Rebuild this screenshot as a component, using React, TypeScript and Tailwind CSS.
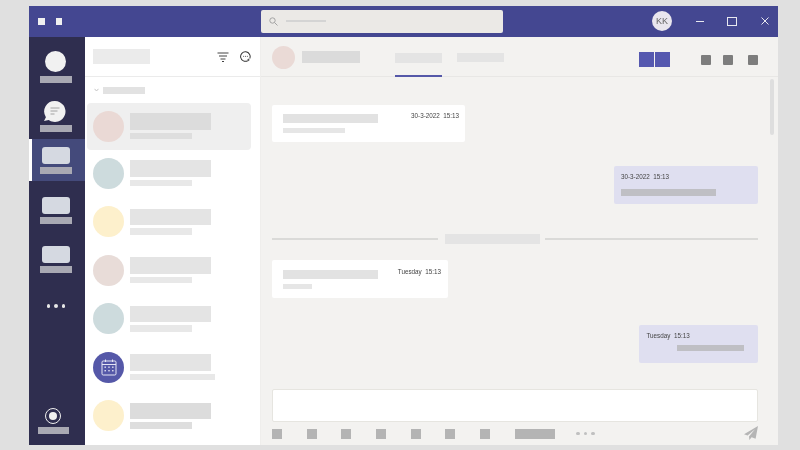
import React from "react";

const Bar = ({ className }: { className: string }) => <div className={className} />;

function FilterIcon() {
  return (
    <svg width="12" height="10" viewBox="0 0 12 10" fill="none" stroke="#444" strokeWidth="1">
      <path d="M0.5 1h11M2 4h8M3.5 7h5M5 9.5h2" />
    </svg>
  );
}

function NewChatIcon() {
  return (
    <svg width="11" height="11" viewBox="0 0 12 12" fill="none" stroke="#333" strokeWidth="1.1">
      <path d="M10.6 8.2A5.2 5.2 0 1 0 8.4 10.6" />
      <path d="M9.2 8.4v2.6M7.9 9.7h2.6" strokeWidth="0.8" />
      <circle cx="4" cy="5.7" r="0.55" fill="#333" stroke="none" />
      <circle cx="6" cy="5.7" r="0.55" fill="#333" stroke="none" />
      <circle cx="8" cy="5.7" r="0.55" fill="#333" stroke="none" />
    </svg>
  );
}

function CalendarIcon() {
  return (
    <svg width="16" height="17" viewBox="0 0 16 17" fill="none" stroke="#e6e6f4" strokeWidth="1">
      <rect x="1" y="2" width="14" height="14" rx="1.2" />
      <path d="M1 5.5h14M4.5 0.5v2.5M11.5 0.5v2.5" />
      <g fill="#e6e6f4" stroke="none">
        <rect x="3.5" y="7.5" width="1.4" height="1.4" />
        <rect x="7.3" y="7.5" width="1.4" height="1.4" />
        <rect x="11.1" y="7.5" width="1.4" height="1.4" />
        <rect x="3.5" y="11" width="1.4" height="1.4" />
        <rect x="7.3" y="11" width="1.4" height="1.4" />
        <rect x="11.1" y="11" width="1.4" height="1.4" />
      </g>
    </svg>
  );
}

function SendIcon() {
  return (
    <svg width="14" height="14" viewBox="0 0 14 14" fill="#b5b5b5">
      <path d="M14 0 L0 8.2 L3.6 9.6 L11 3.2 L5 10.4 L5.4 14 L7.6 11.2 L11.6 12.8 Z" />
    </svg>
  );
}

function SearchIcon() {
  return (
    <svg width="9" height="9" viewBox="0 0 9 9" fill="none" stroke="#a3a3a3" strokeWidth="1">
      <circle cx="3.5" cy="3.5" r="2.7" />
      <path d="M5.5 5.5L8.5 8.5" />
    </svg>
  );
}

function ChatBubble() {
  return (
    <svg width="23" height="23" viewBox="0 0 23 23" className="ml-[13.5px]">
      <path d="M12 1a10.5 10.5 0 1 1-6.3 18.9L1 21l1.9-3.8A10.5 10.5 0 0 1 12 1z" fill="#f1f1f1" />
      <path d="M7.5 8h9M7.5 11h7M7.5 14h4" stroke="#9a9a9a" strokeWidth="0.9" fill="none" />
    </svg>
  );
}

const rows = [
  { av: "bg-[#ead9d5]", active: true, cal: false, wide: false, dark: false },
  { av: "bg-[#cddbdd]", active: false, cal: false, wide: false, dark: false },
  { av: "bg-[#fdf0cc]", active: false, cal: false, wide: false, dark: false },
  { av: "bg-[#e8dcd8]", active: false, cal: false, wide: false, dark: false },
  { av: "bg-[#cddbdd]", active: false, cal: false, wide: false, dark: false },
  { av: "bg-[#5558a8]", active: false, cal: true, wide: true, dark: false },
  { av: "bg-[#fdf0cc]", active: false, cal: false, wide: false, dark: true },
];

function ListRow({ r }: { r: (typeof rows)[number] }) {
  const bar = r.active || r.dark ? "bg-[#dcdcdc]" : "bg-[#e4e4e4]";
  const sub = r.active || r.dark ? "bg-[#dedede]" : "bg-[#e8e8e8]";
  return (
    <div
      className={`flex items-center ${
        r.active
          ? "-mb-[0.5px] ml-[2px] mr-[8.5px] h-[47px] rounded-sm bg-[#efefef] pl-[6.5px]"
          : "h-[48.5px] pl-[8.5px]"
      }`}
    >
      <div className={`flex h-[31px] w-[31px] shrink-0 items-center justify-center rounded-full ${r.av}`}>
        {r.cal && <CalendarIcon />}
      </div>
      <div className="ml-[6px] flex flex-col">
        <Bar className={`h-[16.5px] w-[81px] ${bar}`} />
        <Bar className={`mt-[3px] h-[6.5px] ${r.wide ? "w-[85px]" : "w-[62px]"} ${sub}`} />
      </div>
    </div>
  );
}

const NavBar = ({ cls = "ml-[11px]" }: { cls?: string }) => (
  <div className={`h-[7px] w-[31.5px] bg-[#a9a9b3] ${cls}`} />
);

const Stamp = ({ children }: { children: string }) => (
  <span className="block whitespace-pre text-[6.3px] leading-[8px] text-[#444]">{children}</span>
);

export default function App() {
  return (
    <div
      className="h-[450px] w-[800px] overflow-hidden bg-[#e0e0e0] pb-[5px] pl-[29px] pr-[22.5px] pt-[6px] blur-[0.5px]"
      style={{ fontFamily: '"Liberation Sans", Arial, sans-serif' }}
    >
      <div className="flex h-[439px] w-[748.5px] flex-col">
        {/* title bar */}
        <div className="flex h-[30.5px] shrink-0 items-center bg-[#444791]">
          <div className="ml-[9px] h-[6.5px] w-[6.5px] bg-[#f0f0f0]" />
          <div className="ml-[11px] h-[6.5px] w-[6.5px] bg-[#f0f0f0]" />
          <div className="ml-[199px] flex h-[23px] w-[242px] items-center rounded-[2px] bg-[#ebe9e6] pl-[8px]">
            <SearchIcon />
            <div className="ml-[8px] h-[2px] w-[40px] bg-[#d4d4d4]" />
          </div>
          <div className="ml-[149px] flex h-[20px] w-[20px] items-center justify-center rounded-full bg-[#e9e6ee] text-[9px] text-[#666]">
            KK
          </div>
          <div className="ml-[24px] h-[1.2px] w-[8px] bg-[#e8e8f0]" />
          <div className="ml-[23px] h-[9.5px] w-[10px] border border-[#e8e8f0]" />
          <svg width="8" height="8" viewBox="0 0 8 8" stroke="#e8e8f0" strokeWidth="1" className="ml-[24px]">
            <path d="M0.5 0.5l7 7M7.5 0.5l-7 7" />
          </svg>
        </div>

        <div className="flex min-h-0 flex-1">
          {/* nav rail */}
          <div className="flex w-[55.5px] shrink-0 flex-col bg-[#2f2e4f]">
            <div className="ml-[16px] mt-[14.5px] h-[21px] w-[21px] rounded-full bg-[#f1f1f1]" />
            <NavBar cls="ml-[11px] mt-[4px]" />
            <div className="mt-[17px]">
              <ChatBubble />
            </div>
            <NavBar cls="ml-[11px] mt-[2px]" />
            <div className="mt-[7px] h-[42px] border-l-[3px] border-white bg-[#444a7b] pt-[8px]">
              <div className="ml-[9.5px] h-[17px] w-[28.5px] rounded-[3px] bg-[#d5d9e1]" />
              <NavBar cls="ml-[8px] mt-[3px]" />
            </div>
            <div className="ml-[12.5px] mt-[16px] h-[17px] w-[28.5px] rounded-[3px] bg-[#d5d9e1]" />
            <NavBar cls="ml-[11px] mt-[3px]" />
            <div className="ml-[12.5px] mt-[22px] h-[17px] w-[28.5px] rounded-[3px] bg-[#d5d9e1]" />
            <NavBar cls="ml-[11px] mt-[3px]" />
            <div className="ml-[17.5px] mt-[31px] flex gap-[4px]">
              <div className="h-[3.5px] w-[3.5px] rounded-full bg-[#e8e8e8]" />
              <div className="h-[3.5px] w-[3.5px] rounded-full bg-[#e8e8e8]" />
              <div className="h-[3.5px] w-[3.5px] rounded-full bg-[#e8e8e8]" />
            </div>
            <div className="ml-[16px] mt-auto flex h-[16px] w-[16px] items-center justify-center rounded-full border border-[#f0f0f0]">
              <div className="h-[8.5px] w-[8.5px] rounded-full bg-[#f0f0f0]" />
            </div>
            <NavBar cls="mb-[11px] ml-[8.5px] mt-[3px]" />
          </div>

          {/* conversation list */}
          <div className="flex w-[175px] shrink-0 flex-col bg-white">
            <div className="flex h-[40px] shrink-0 items-center border-b border-[#ebebeb] pl-[8.5px]">
              <Bar className="h-[15px] w-[57px] bg-[#ebebeb]" />
              <div className="ml-[67px] mt-[1px]">
                <FilterIcon />
              </div>
              <div className="ml-[11px]">
                <NewChatIcon />
              </div>
            </div>
            <div className="flex h-[26px] shrink-0 items-center pl-[9px] pt-[1px]">
              <svg width="5" height="4" viewBox="0 0 5 4" fill="none" stroke="#c4c4c4" strokeWidth="1">
                <path d="M0.5 0.8L2.5 3L4.5 0.8" />
              </svg>
              <Bar className="ml-[4px] h-[7px] w-[42px] bg-[#e2e2e2]" />
            </div>
            {rows.map((r, i) => (
              <ListRow key={i} r={r} />
            ))}
          </div>

          {/* main */}
          <div className="relative flex min-w-0 flex-1 flex-col border-l border-[#efeeec] bg-[#f3f2f0]">
            <div className="flex h-[40px] shrink-0 items-center border-b border-[#e8e7e5] pl-[11.5px]">
              <div className="mt-[2px] h-[23px] w-[23px] rounded-full bg-[#eadad6]" />
              <Bar className="ml-[7px] mt-[2px] h-[12px] w-[58px] bg-[#dbdbdb]" />
              <div className="relative ml-[34.5px] h-[39px] w-[47px] pt-[16.5px]">
                <Bar className="h-[9.5px] w-[47px] bg-[#e4e4e4]" />
                <div className="absolute bottom-[-1px] left-0 h-[2px] w-[47px] bg-[#5558a8]" />
              </div>
              <Bar className="ml-[15px] mt-[3px] h-[9.5px] w-[47px] bg-[#e4e4e4]" />
              <div className="ml-[135px] mt-[7px] h-[15px] w-[15px] bg-[#5558af]" />
              <div className="ml-px mt-[7px] h-[15px] w-[15px] bg-[#5558af]" />
              <div className="ml-[31px] mt-[7px] h-[10px] w-[10px] rounded-[1px] bg-[#7d7d7d]" />
              <div className="ml-[12.5px] mt-[7px] h-[10px] w-[10px] rounded-[1px] bg-[#7d7d7d]" />
              <div className="ml-[14.5px] mt-[7px] h-[10px] w-[10px] rounded-[1px] bg-[#7d7d7d]" />
            </div>

            <div className="absolute right-[3.5px] top-[42.5px] h-[56px] w-[4px] rounded-sm bg-[#dedede]" />

            <div className="flex min-h-0 flex-1 flex-col pl-[11.5px] pr-[20px]">
              {/* message 1 */}
              <div className="mt-[28px] flex h-[37.5px] w-[193px] rounded-[2px] bg-white pl-[11px] pr-[6px] pt-[9px]">
                <div className="flex flex-col">
                  <Bar className="h-[9.5px] w-[95px] bg-[#e2e2e2]" />
                  <Bar className="mt-[5px] h-[5px] w-[62px] bg-[#e6e6e6]" />
                </div>
                <div className="-mt-[2px] ml-auto">
                  <Stamp>{"30-3-2022  15:13"}</Stamp>
                </div>
              </div>

              {/* message 2 */}
              <div className="ml-auto mt-[24px] flex h-[38px] w-[143.5px] flex-col rounded-[2px] bg-[#dfdff0] pl-[7px] pt-[6.5px]">
                <Stamp>{"30-3-2022  15:13"}</Stamp>
                <Bar className="mt-[8.5px] h-[7px] w-[95px] bg-[#bfbfc4]" />
              </div>

              {/* divider */}
              <div className="mt-[30px] flex h-[9.5px] items-center">
                <div className="h-[1.5px] flex-1 bg-[#dadad8]" />
                <Bar className="ml-[7px] mr-[5.5px] h-[9.5px] w-[94.5px] bg-[#e4e4e4]" />
                <div className="h-[1.5px] w-[212.5px] bg-[#dadad8]" />
              </div>

              {/* message 3 */}
              <div className="mt-[16.5px] flex h-[38px] w-[175.5px] rounded-[2px] bg-white pl-[11px] pr-[6.5px] pt-[10px]">
                <div className="flex flex-col">
                  <Bar className="h-[9px] w-[95px] bg-[#e2e2e2]" />
                  <Bar className="mt-[5px] h-[5px] w-[29px] bg-[#e6e6e6]" />
                </div>
                <div className="-mt-[2px] ml-auto">
                  <Stamp>{"Tuesday  15:13"}</Stamp>
                </div>
              </div>

              {/* message 4 */}
              <div className="ml-auto mt-[27px] flex h-[37.5px] w-[118.5px] flex-col rounded-[2px] bg-[#dfdff0] pl-[7.5px] pr-[14px] pt-[6.5px]">
                <Stamp>{"Tuesday  15:13"}</Stamp>
                <Bar className="ml-auto mt-[5px] h-[6.5px] w-[67px] bg-[#bfbfc4]" />
              </div>

              {/* composer */}
              <div className="mt-[26.5px] h-[32.5px] w-full shrink-0 rounded-[2px] border border-[#e6e5e0] bg-white" />
              <div className="mt-[7.5px] flex items-start">
                {[0, 1, 2, 3, 4, 5, 6].map((i) => (
                  <div key={i} className="mr-[24.7px] h-[9.5px] w-[10px] bg-[#b4b4b4]" />
                ))}
                <Bar className="h-[9.5px] w-[40px] bg-[#b4b4b4]" />
                <div className="ml-[21.5px] mt-[2.5px] flex gap-[4px]">
                  <div className="h-[3.5px] w-[3.5px] rounded-full bg-[#c0c0c0]" />
                  <div className="h-[3.5px] w-[3.5px] rounded-full bg-[#c0c0c0]" />
                  <div className="h-[3.5px] w-[3.5px] rounded-full bg-[#c0c0c0]" />
                </div>
                <div className="-mt-[3px] ml-auto">
                  <SendIcon />
                </div>
              </div>
            </div>
          </div>
        </div>
      </div>
    </div>
  );
}
